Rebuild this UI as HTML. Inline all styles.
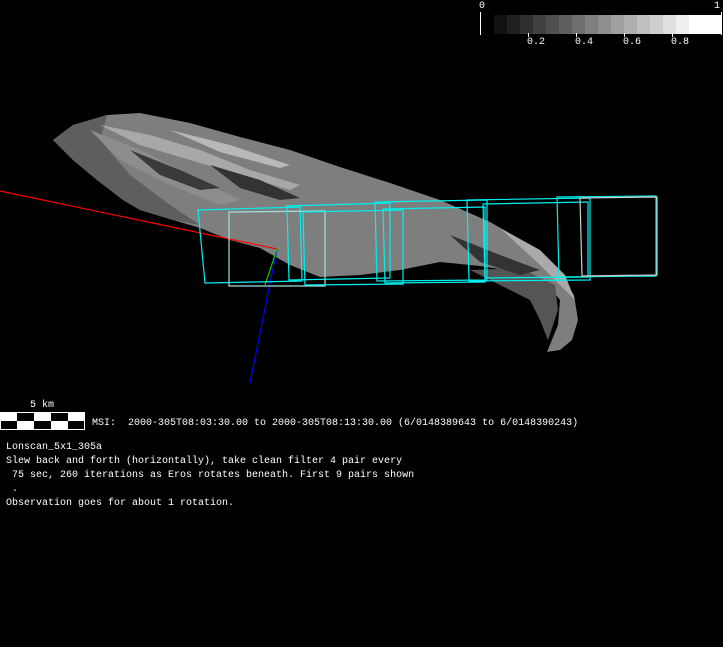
<!DOCTYPE html>
<html><head><meta charset="utf-8"><style>
html,body{margin:0;padding:0;background:#000;}
body{width:723px;height:647px;overflow:hidden;position:relative;font-family:"Liberation Mono","DejaVu Sans Mono",monospace;color:#fff;}
.t{position:absolute;font-size:10px;line-height:12px;white-space:pre;}
</style></head><body>
<svg width="723" height="647" style="position:absolute;left:0;top:0">
<g>
<rect x="494" y="15" width="14" height="19" fill="#111"/>
<rect x="507" y="15" width="14" height="19" fill="#202020"/>
<rect x="520" y="15" width="14" height="19" fill="#303030"/>
<rect x="533" y="15" width="14" height="19" fill="#404040"/>
<rect x="546" y="15" width="14" height="19" fill="#4f4f4f"/>
<rect x="559" y="15" width="14" height="19" fill="#5f5f5f"/>
<rect x="572" y="15" width="14" height="19" fill="#6f6f6f"/>
<rect x="585" y="15" width="14" height="19" fill="#7f7f7f"/>
<rect x="598" y="15" width="14" height="19" fill="#8f8f8f"/>
<rect x="611" y="15" width="14" height="19" fill="#9f9f9f"/>
<rect x="624" y="15" width="14" height="19" fill="#afafaf"/>
<rect x="637" y="15" width="14" height="19" fill="#bfbfbf"/>
<rect x="650" y="15" width="14" height="19" fill="#cfcfcf"/>
<rect x="663" y="15" width="14" height="19" fill="#dfdfdf"/>
<rect x="676" y="15" width="14" height="19" fill="#efefef"/>
<rect x="689" y="15" width="32" height="19" fill="#ffffff"/>
<line x1="480.5" y1="12" x2="480.5" y2="35" stroke="#fff"/>
<line x1="721.5" y1="12" x2="721.5" y2="35" stroke="#fff"/>
<line x1="528.5" y1="33" x2="528.5" y2="37" stroke="#fff"/>
<line x1="576.5" y1="33" x2="576.5" y2="37" stroke="#fff"/>
<line x1="624.5" y1="33" x2="624.5" y2="37" stroke="#fff"/>
<line x1="672.5" y1="33" x2="672.5" y2="37" stroke="#fff"/>
</g>
<polygon points="53,140 73,125 107,115 140,113 190,123 240,137 290,150 340,167 390,183 440,200 490,222 530,245 558,270 574,295 578,320 572,340 560,350 547,352 558,325 560,300 548,285 520,272 480,266 440,262 400,270 360,275 320,277 290,265 260,248 230,240 200,228 173,220 140,210 123,200 97,180 73,160" fill="#7e7e7e"/>
<polygon points="53,140 73,125 107,115 100,140 130,175 170,205 200,225 173,220 140,210 123,200 97,180 73,160" fill="#5e5e5e"/>
<polygon points="90,130 140,150 190,175 240,200 220,205 170,185 120,160" fill="#8d8d8d"/>
<polygon points="100,125 150,135 200,150 250,170 300,185 290,190 240,175 190,160 140,145" fill="#a8a8a8"/>
<polygon points="130,150 180,170 220,188 200,190 160,175" fill="#3a3a3a"/>
<polygon points="210,165 260,180 300,198 280,200 240,188" fill="#333"/>
<polygon points="170,130 230,145 290,165 280,168 220,152" fill="#b8b8b8"/>
<polygon points="470,270 520,268 555,285 558,310 548,340 540,320 530,300 500,285" fill="#555"/>
<polygon points="500,228 540,250 565,275 575,300 565,290 540,265" fill="#aaa"/>
<polygon points="450,235 500,255 540,270 520,275 480,262" fill="#333"/>
<line x1="0" y1="191" x2="277" y2="249" stroke="#f00" stroke-width="1.2"/>
<line x1="277" y1="249" x2="250" y2="383" stroke="#00f" stroke-width="1.2"/>
<line x1="277" y1="249" x2="265" y2="285" stroke="#0c0" stroke-width="1.2"/>
<g fill="none" stroke="#00f0f0" stroke-width="1.2">
<polygon points="198,210 300,207 302,281 205,283"/>
<polygon points="229,212 325,211 325,286 229,286" stroke="#a0e0e0"/>
<polygon points="287,206 390,203 390,278 289,280"/>
<polygon points="303,212 403,210 403,284 305,285"/>
<polygon points="375,202 487,200 487,280 377,281"/>
<polygon points="383,209 485,207 485,282 385,283"/>
<polygon points="467,200 590,198 590,280 469,281"/>
<polygon points="483,204 588,202 588,277 485,278"/>
<polygon points="557,197 656,196 656,276 559,277"/>
<polygon points="580,198 657,197 657,275 582,276" stroke="#ccc"/>
</g>
<rect x="0" y="412" width="85" height="18" fill="#fff"/>
<rect x="17" y="413" width="17" height="8" fill="#000"/>
<rect x="51" y="413" width="17" height="8" fill="#000"/>
<rect x="1" y="421" width="16" height="8" fill="#000"/>
<rect x="34" y="421" width="17" height="8" fill="#000"/>
<rect x="68" y="421" width="16" height="8" fill="#000"/>
</svg>
<div class="t" style="left:479px;top:1px">0</div>
<div class="t" style="left:714px;top:1px">1</div>
<div class="t" style="left:527px;top:37px">0.2</div>
<div class="t" style="left:575px;top:37px">0.4</div>
<div class="t" style="left:623px;top:37px">0.6</div>
<div class="t" style="left:671px;top:37px">0.8</div>
<div class="t" style="left:30px;top:400px">5 km</div>
<div class="t" style="left:92px;top:418px">MSI:  2000-305T08:03:30.00 to 2000-305T08:13:30.00 (6/0148389643 to 6/0148390243)</div>
<div class="t" style="left:6px;top:442px">Lonscan_5x1_305a</div>
<div class="t" style="left:6px;top:456px">Slew back and forth (horizontally), take clean filter 4 pair every</div>
<div class="t" style="left:6px;top:470px"> 75 sec, 260 iterations as Eros rotates beneath. First 9 pairs shown</div>
<div class="t" style="left:6px;top:484px"> .</div>
<div class="t" style="left:6px;top:498px">Observation goes for about 1 rotation.</div>
</body></html>
